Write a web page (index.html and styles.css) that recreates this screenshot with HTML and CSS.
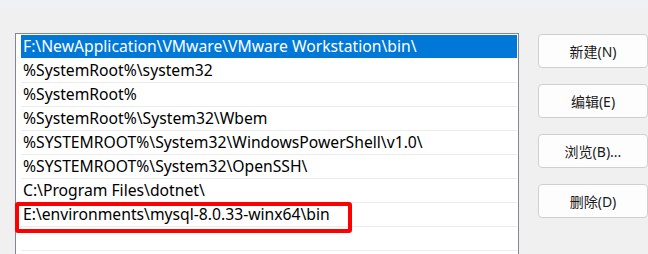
FILE: index.html
```html
<!DOCTYPE html>
<html lang="zh-CN">
<head>
<meta charset="utf-8">
<link rel="stylesheet" href="styles.css">
</head>
<body>
<div class="topband"></div>
<div class="main">
  <div class="list">
    <div class="row selected"><span>F:\NewApplication\VMware\VMware Workstation\bin\</span></div>
    <div class="row"><span>%SystemRoot%\system32</span></div>
    <div class="row"><span>%SystemRoot%</span></div>
    <div class="row"><span>%SystemRoot%\System32\Wbem</span></div>
    <div class="row"><span>%SYSTEMROOT%\System32\WindowsPowerShell\v1.0\</span></div>
    <div class="row"><span>%SYSTEMROOT%\System32\OpenSSH\</span></div>
    <div class="row"><span>C:\Program Files\dotnet\</span></div>
    <div class="row"><span>E:\environments\mysql-8.0.33-winx64\bin</span></div>
    <div class="row"><span></span></div>
  </div>
  <div class="buttons">
    <button class="btn">新建(N)</button>
    <button class="btn">编辑(E)</button>
    <button class="btn">浏览(B)...</button>
    <button class="btn">删除(D)</button>
  </div>
</div>
<div class="highlight"></div>
</body>
</html>
```
FILE: styles.css
```css
html, body {
  margin: 0;
  padding: 0;
  width: 648px;
  height: 254px;
  overflow: hidden;
  background: #f0f0f0;
  font-family: "Noto Sans", "Noto Sans CJK SC", sans-serif;
}
.topband {
  height: 7px;
  background: #eef2f6;
}
.main {
  display: flex;
  align-items: flex-start;
  padding-left: 15px;
  padding-top: 26px;
}
.list {
  width: 504px;
  height: 221px;
  overflow: hidden;
  border: 1px solid #828790;
  border-bottom: none;
  background: #ffffff;
  padding: 1px 0 0 5px;
  box-sizing: border-box;
}
.row {
  height: 24px;
  box-sizing: border-box;
  border-bottom: 1px solid #ececec;
  padding-left: 2px;
  font-size: 15.7px;
  line-height: 23px;
  color: #000000;
  white-space: nowrap;
  margin-right: 1px;
}
.row.selected {
  background: #0078d7;
  color: #ffffff;
  border-bottom-color: #ffffff;
}
.buttons {
  display: flex;
  flex-direction: column;
  gap: 16px;
  margin-left: 19px;
  padding-top: 1px;
}
.btn {
  width: 110px;
  height: 34px;
  box-sizing: border-box;
  background: #fdfdfd;
  border: 1px solid #d0d0d0;
  border-radius: 4px;
  font-family: "Noto Sans", "Noto Sans CJK SC", sans-serif;
  font-size: 14px;
  color: #1a1a1a;
  padding: 0;
}
.highlight {
  position: absolute;
  left: 15px;
  top: 202px;
  width: 337px;
  height: 31px;
  box-sizing: border-box;
  border: 4px solid #ff0000;
  border-radius: 3px;
}
```
